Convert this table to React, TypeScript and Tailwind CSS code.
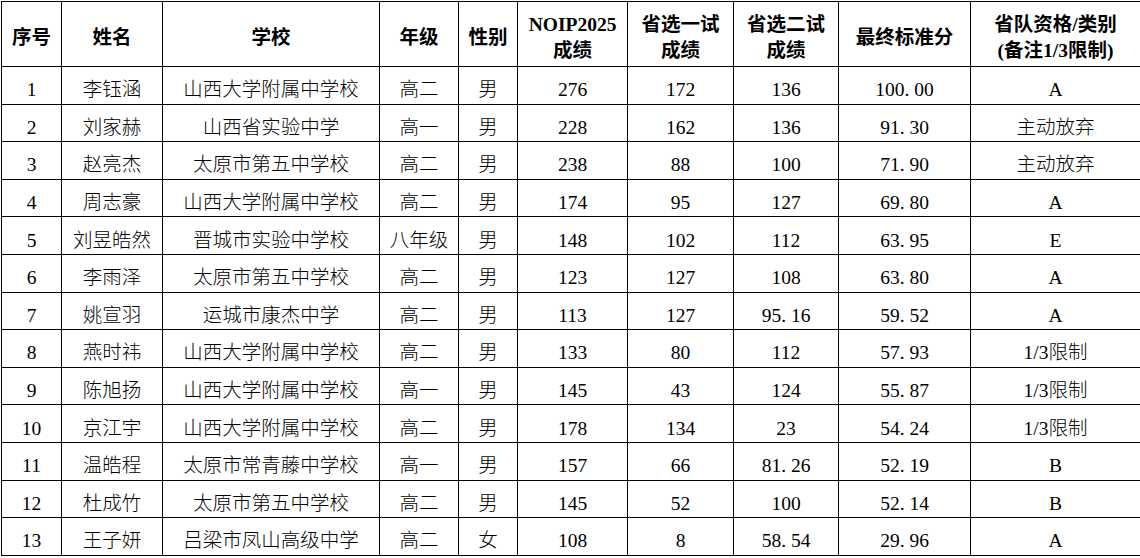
import React from "react";

type Row = [string, string, string, string, string, string, string, string, string, string];

const rows: Row[] = [
  ["1", "李钰涵", "山西大学附属中学校", "高二", "男", "276", "172", "136", "100.00", "A"],
  ["2", "刘家赫", "山西省实验中学", "高一", "男", "228", "162", "136", "91.30", "主动放弃"],
  ["3", "赵亮杰", "太原市第五中学校", "高二", "男", "238", "88", "100", "71.90", "主动放弃"],
  ["4", "周志豪", "山西大学附属中学校", "高二", "男", "174", "95", "127", "69.80", "A"],
  ["5", "刘昱皓然", "晋城市实验中学校", "八年级", "男", "148", "102", "112", "63.95", "E"],
  ["6", "李雨泽", "太原市第五中学校", "高二", "男", "123", "127", "108", "63.80", "A"],
  ["7", "姚宣羽", "运城市康杰中学", "高二", "男", "113", "127", "95.16", "59.52", "A"],
  ["8", "燕时祎", "山西大学附属中学校", "高二", "男", "133", "80", "112", "57.93", "1/3限制"],
  ["9", "陈旭扬", "山西大学附属中学校", "高一", "男", "145", "43", "124", "55.87", "1/3限制"],
  ["10", "京江宇", "山西大学附属中学校", "高二", "男", "178", "134", "23", "54.24", "1/3限制"],
  ["11", "温皓程", "太原市常青藤中学校", "高一", "男", "157", "66", "81.26", "52.19", "B"],
  ["12", "杜成竹", "太原市第五中学校", "高二", "男", "145", "52", "100", "52.14", "B"],
  ["13", "王子妍", "吕梁市凤山高级中学", "高二", "女", "108", "8", "58.54", "29.96", "A"],
];

const widths = [60, 101, 217, 79, 59, 110, 106, 105, 132, 170];

// SimSun-style decimals: the point takes a half-width cell
function Num({ v }: { v: string }) {
  if (!v.includes(".")) return <>{v}</>;
  const [a, b] = v.split(".");
  return (
    <>
      {a}
      <span className="inline-block w-[0.5em] text-left">.</span>
      {b}
    </>
  );
}

const th = "border border-black text-center align-middle font-bold leading-[26px] pt-2";
const td = "border border-black text-center align-middle pt-[10px] leading-[24px] font-light";

export default function App() {
  return (
    <div
      className="w-[1140px] h-[558px] bg-white pl-px pt-px text-black"
      style={{ fontFamily: "'Liberation Serif', 'Noto Sans CJK SC', serif" }}
    >
      <table className="border-collapse table-fixed w-[1138px] text-[19.5px]">
        <colgroup>
          {widths.map((w, i) => (
            <col key={i} style={{ width: w }} />
          ))}
        </colgroup>
        <thead>
          <tr className="h-[65px]">
            <th className={th}>序号</th>
            <th className={th}>姓名</th>
            <th className={th}>学校</th>
            <th className={th}>年级</th>
            <th className={th}>性别</th>
            <th className={th}>
              NOIP2025
              <br />
              成绩
            </th>
            <th className={th}>
              省选一试
              <br />
              成绩
            </th>
            <th className={th}>
              省选二试
              <br />
              成绩
            </th>
            <th className={th}>最终标准分</th>
            <th className={th}>
              省队资格/类别
              <br />
              (备注1/3限制)
            </th>
          </tr>
        </thead>
        <tbody>
          {rows.map((r) => (
            <tr key={r[0]} className="h-[37.6px]">
              {r.map((c, i) => (
                <td key={i} className={td}>
                  {i >= 5 && i <= 8 ? <Num v={c} /> : c}
                </td>
              ))}
            </tr>
          ))}
        </tbody>
      </table>
    </div>
  );
}
